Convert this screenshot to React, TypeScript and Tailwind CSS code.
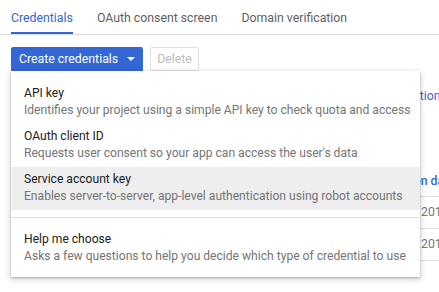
const menuItems = [
  { title: 'API key', desc: 'Identifies your project using a simple API key to check quota and access' },
  { title: 'OAuth client ID', desc: "Requests user consent so your app can access the user's data" },
  { title: 'Service account key', desc: 'Enables server-to-server, app-level authentication using robot accounts', active: true },
];

const App = () => {
  return (
    <div className="relative w-[439px] h-[292px] overflow-hidden bg-white font-['Roboto',sans-serif] text-[12.3px]">
      {/* tabs */}
      <div className="flex gap-6 pl-[11px] border-b border-[#dadada] h-[35px]">
        <div className="pt-[10px] leading-[16px] text-[#3367d6] border-b-2 border-[#3367d6]">Credentials</div>
        <div className="pt-[10px] leading-[16px] text-[#5f5f5f]">OAuth consent screen</div>
        <div className="pt-[10px] leading-[16px] text-[#5f5f5f]">Domain verification</div>
      </div>

      {/* actions */}
      <div className="flex gap-[7px] pl-[11px] mt-[12px]">
        <button
          type="button"
          className="flex items-center h-[24px] w-[132px] pl-[8px] bg-[#3367d6] text-white rounded-t-[2px] leading-none"
        >
          Create credentials
          <span className="ml-[9px] w-0 h-0 border-l-[4px] border-r-[4px] border-t-[4px] border-l-transparent border-r-transparent border-t-white" />
        </button>
        <button
          type="button"
          className="h-[24px] w-[49px] border border-[#e0e0e0] rounded-[2px] text-[#bdbdbd] leading-none"
        >
          Delete
        </button>
      </div>

      {/* page content behind the menu */}
      <div className="grid grid-cols-[366px_1fr] pl-[11px] whitespace-nowrap">
        <div className="mt-[17px] leading-[16px] text-[#616161]">Create credentials to access your enabled APIs. For more</div>
        <div className="mt-[17px] leading-[16px] text-[#4a5ed1]">information</div>

        <div className="col-span-2 grid grid-cols-[366px_1fr] mt-[63px] border-b border-[#e0e0e0] h-[30px] items-center font-medium text-[#3367d6]">
          <div>Name</div>
          <div className="pl-[4px]">Creation date</div>
        </div>
        <div className="col-span-2 grid grid-cols-[366px_1fr] border-b border-[#e0e0e0] h-[32px] items-center text-[#757575]">
          <div>Browser key</div>
          <div className="pl-[44px]">2017</div>
        </div>
        <div className="col-span-2 grid grid-cols-[366px_1fr] border-b border-[#e0e0e0] h-[32px] items-center text-[#757575]">
          <div>Server key</div>
          <div className="pl-[44px]">2017</div>
        </div>
      </div>

      {/* dropdown menu */}
      <div className="absolute left-[11px] top-[71px] w-[409px] bg-white pt-[10px] pb-[7px] text-[12.1px] whitespace-nowrap shadow-[0_1px_2px_rgba(0,0,0,0.25),0_2px_6px_1px_rgba(0,0,0,0.15)]">
        {menuItems.map((item) => (
          <div
            key={item.title}
            className={`pl-[13px] pt-[4px] pb-[5px] leading-[17px] ${item.active ? 'bg-[#eeeeee]' : ''}`}
          >
            <div className="text-[#212121]">{item.title}</div>
            <div className="text-[#757575]">{item.desc}</div>
          </div>
        ))}
        <div className="h-px bg-[#e0e0e0] mt-[7px] mb-[9px]" />
        <div className="pl-[13px] pt-[4px] pb-[5px] leading-[17px]">
          <div className="text-[#212121]">Help me choose</div>
          <div className="text-[#757575]">Asks a few questions to help you decide which type of credential to use</div>
        </div>
      </div>
    </div>
  );
};

export default App;
